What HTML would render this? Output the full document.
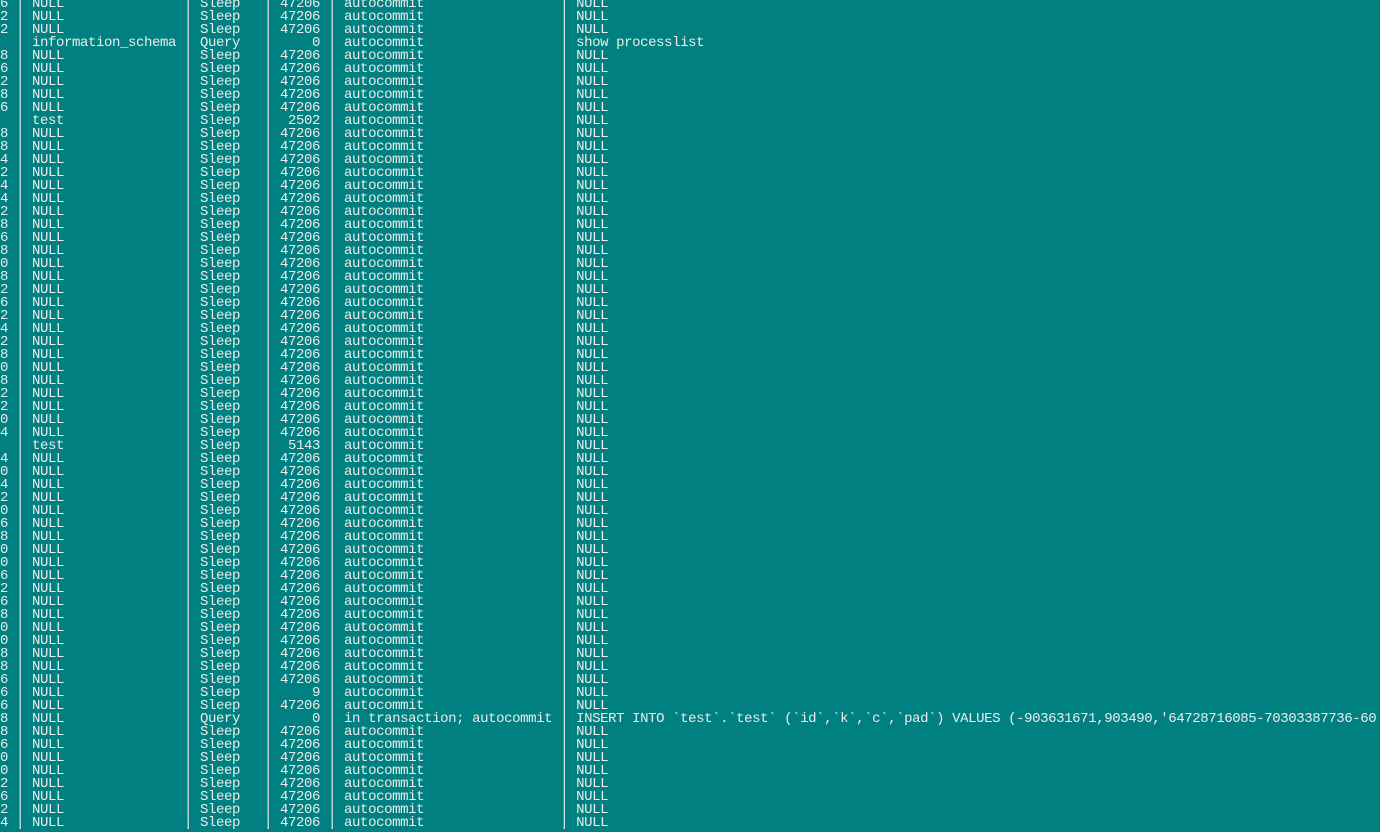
<!DOCTYPE html>
<html><head><meta charset="utf-8"><style>
html,body{margin:0;padding:0;background:#008080;width:1380px;height:832px;overflow:hidden}
pre{position:absolute;left:0;top:-2px;margin:0;font-family:"Liberation Mono",monospace;font-size:14px;letter-spacing:-0.4px;line-height:13px;color:#ececec;white-space:pre}
</style></head><body><pre>6 | NULL               | Sleep   | 47206 | autocommit                 | NULL
2 | NULL               | Sleep   | 47206 | autocommit                 | NULL
2 | NULL               | Sleep   | 47206 | autocommit                 | NULL
  | information_schema | Query   |     0 | autocommit                 | show processlist
8 | NULL               | Sleep   | 47206 | autocommit                 | NULL
6 | NULL               | Sleep   | 47206 | autocommit                 | NULL
2 | NULL               | Sleep   | 47206 | autocommit                 | NULL
8 | NULL               | Sleep   | 47206 | autocommit                 | NULL
6 | NULL               | Sleep   | 47206 | autocommit                 | NULL
  | test               | Sleep   |  2502 | autocommit                 | NULL
8 | NULL               | Sleep   | 47206 | autocommit                 | NULL
8 | NULL               | Sleep   | 47206 | autocommit                 | NULL
4 | NULL               | Sleep   | 47206 | autocommit                 | NULL
2 | NULL               | Sleep   | 47206 | autocommit                 | NULL
4 | NULL               | Sleep   | 47206 | autocommit                 | NULL
4 | NULL               | Sleep   | 47206 | autocommit                 | NULL
2 | NULL               | Sleep   | 47206 | autocommit                 | NULL
8 | NULL               | Sleep   | 47206 | autocommit                 | NULL
6 | NULL               | Sleep   | 47206 | autocommit                 | NULL
8 | NULL               | Sleep   | 47206 | autocommit                 | NULL
0 | NULL               | Sleep   | 47206 | autocommit                 | NULL
8 | NULL               | Sleep   | 47206 | autocommit                 | NULL
2 | NULL               | Sleep   | 47206 | autocommit                 | NULL
6 | NULL               | Sleep   | 47206 | autocommit                 | NULL
2 | NULL               | Sleep   | 47206 | autocommit                 | NULL
4 | NULL               | Sleep   | 47206 | autocommit                 | NULL
2 | NULL               | Sleep   | 47206 | autocommit                 | NULL
8 | NULL               | Sleep   | 47206 | autocommit                 | NULL
0 | NULL               | Sleep   | 47206 | autocommit                 | NULL
8 | NULL               | Sleep   | 47206 | autocommit                 | NULL
2 | NULL               | Sleep   | 47206 | autocommit                 | NULL
2 | NULL               | Sleep   | 47206 | autocommit                 | NULL
0 | NULL               | Sleep   | 47206 | autocommit                 | NULL
4 | NULL               | Sleep   | 47206 | autocommit                 | NULL
  | test               | Sleep   |  5143 | autocommit                 | NULL
4 | NULL               | Sleep   | 47206 | autocommit                 | NULL
0 | NULL               | Sleep   | 47206 | autocommit                 | NULL
4 | NULL               | Sleep   | 47206 | autocommit                 | NULL
2 | NULL               | Sleep   | 47206 | autocommit                 | NULL
0 | NULL               | Sleep   | 47206 | autocommit                 | NULL
6 | NULL               | Sleep   | 47206 | autocommit                 | NULL
8 | NULL               | Sleep   | 47206 | autocommit                 | NULL
0 | NULL               | Sleep   | 47206 | autocommit                 | NULL
0 | NULL               | Sleep   | 47206 | autocommit                 | NULL
6 | NULL               | Sleep   | 47206 | autocommit                 | NULL
2 | NULL               | Sleep   | 47206 | autocommit                 | NULL
6 | NULL               | Sleep   | 47206 | autocommit                 | NULL
8 | NULL               | Sleep   | 47206 | autocommit                 | NULL
0 | NULL               | Sleep   | 47206 | autocommit                 | NULL
0 | NULL               | Sleep   | 47206 | autocommit                 | NULL
8 | NULL               | Sleep   | 47206 | autocommit                 | NULL
8 | NULL               | Sleep   | 47206 | autocommit                 | NULL
6 | NULL               | Sleep   | 47206 | autocommit                 | NULL
6 | NULL               | Sleep   |     9 | autocommit                 | NULL
6 | NULL               | Sleep   | 47206 | autocommit                 | NULL
8 | NULL               | Query   |     0 | in transaction; autocommit | INSERT INTO `test`.`test` (`id`,`k`,`c`,`pad`) VALUES (-903631671,903490,'64728716085-70303387736-60
8 | NULL               | Sleep   | 47206 | autocommit                 | NULL
6 | NULL               | Sleep   | 47206 | autocommit                 | NULL
0 | NULL               | Sleep   | 47206 | autocommit                 | NULL
0 | NULL               | Sleep   | 47206 | autocommit                 | NULL
2 | NULL               | Sleep   | 47206 | autocommit                 | NULL
6 | NULL               | Sleep   | 47206 | autocommit                 | NULL
2 | NULL               | Sleep   | 47206 | autocommit                 | NULL
4 | NULL               | Sleep   | 47206 | autocommit                 | NULL
</pre></body></html>
